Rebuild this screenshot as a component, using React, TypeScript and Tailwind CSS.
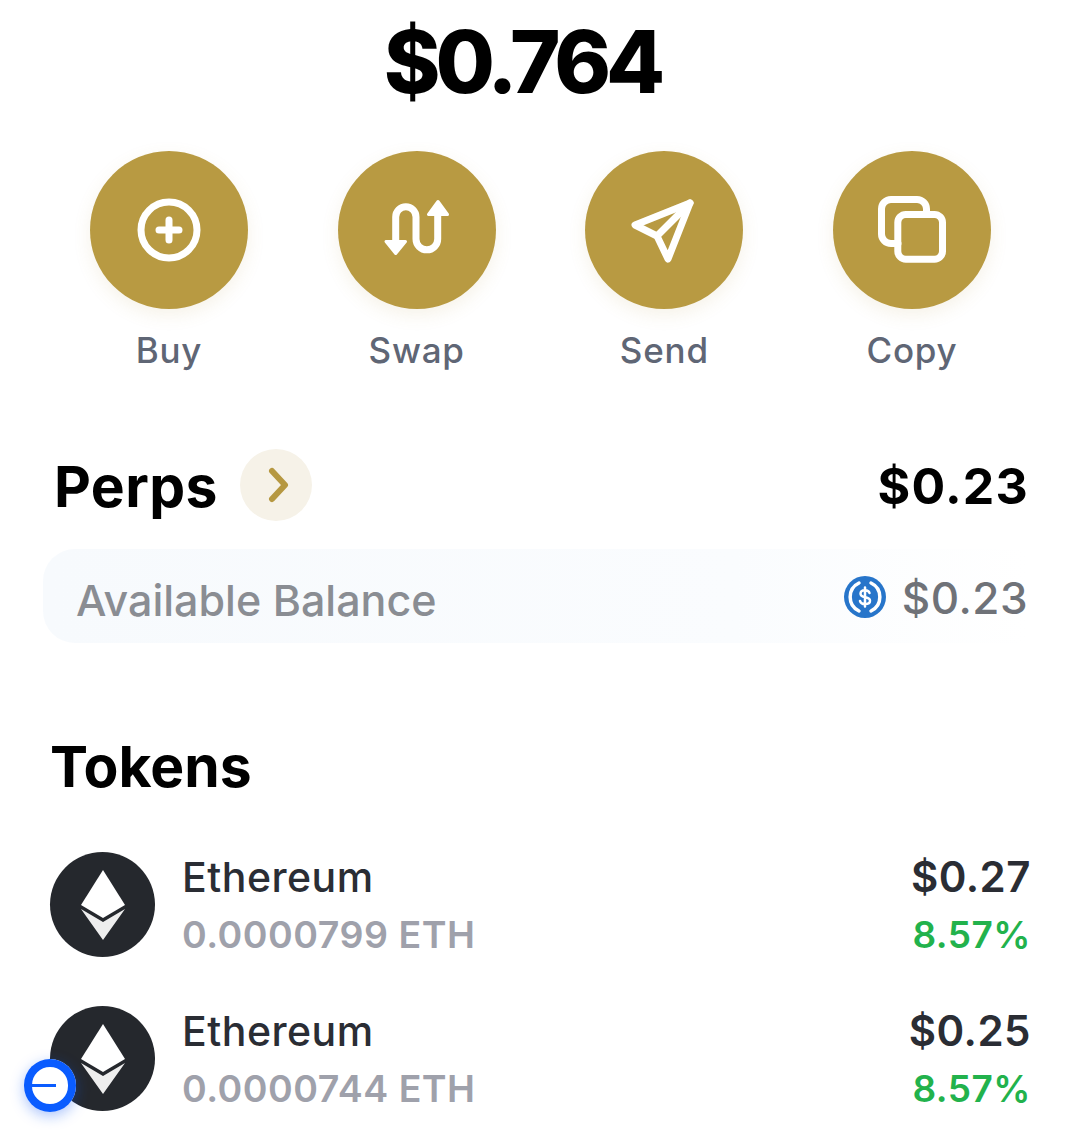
import React from "react";

const font = { fontFamily: "Inter, sans-serif" };

function Action({ label, children }: { label: string; children: React.ReactNode }) {
  return (
    <div className="flex w-[158px] flex-col items-center">
      <div className="flex h-[158px] w-[158px] items-center justify-center rounded-full bg-[#b89a42] shadow-[0_6px_18px_rgba(182,152,65,0.12)]">
        {children}
      </div>
      <div className="mt-[20px] text-[35px] font-[450] leading-[42px] tracking-[0.8px] text-[#5f6675]">{label}</div>
    </div>
  );
}

function Eth() {
  return (
    <div className="flex h-[105px] w-[105px] items-center justify-center rounded-full bg-[#25282d]">
      <svg width="44" height="70" viewBox="0 0 44 70">
        <path d="M22 0 L44 35 L22 48 L0 35 Z" fill="#fff" />
        <path d="M0 39 L22 52 L44 39 L22 70 Z" fill="#eeeeee" />
      </svg>
    </div>
  );
}

function Token({ amount, value, mt }: { amount: string; value: string; mt: string }) {
  return (
    <div className={`flex h-[105px] items-start justify-between ${mt}`}>
      <div className="flex items-center">
        <Eth />
        <div className="ml-[27px]">
          <div className="text-[41px] font-medium leading-[50px] tracking-[0.5px] text-[#2a2d34]">Ethereum</div>
          <div className="mt-[11px] text-[37.5px] font-semibold leading-[44px] tracking-[0.5px] text-[#9fa1ab]">{amount}</div>
        </div>
      </div>
      <div className="text-right">
        <div className="text-[42px] font-semibold leading-[50px] tracking-[0.5px] text-[#2a2d34]">{value}</div>
        <div className="mt-[11px] text-[37px] font-semibold leading-[44px] tracking-[0.5px] text-[#22b24c]">8.57%</div>
      </div>
    </div>
  );
}

export default function App() {
  return (
    <div style={font} className="relative h-[1143px] w-[1080px] overflow-hidden bg-white">
      <div className="flex justify-center pr-[36px] pt-[16px] text-[86px] font-[850] leading-[92px] tracking-[-5px] text-black">$0.764</div>

      <div className="mt-[43px] flex justify-between pl-[90px] pr-[89px]">
        <Action label="Buy">
          <svg width="64" height="64" viewBox="0 0 64 64" fill="none" stroke="#fff" strokeWidth="7" strokeLinecap="round">
            <circle cx="32" cy="32" r="28" />
            <path d="M32 22v20M22 32h20" />
          </svg>
        </Action>
        <Action label="Swap">
          <svg width="74" height="68" viewBox="0 0 74 68" fill="none" stroke="#fff" strokeWidth="7" strokeLinecap="round" strokeLinejoin="round">
            <path d="M15.700 46V21a10.150 10.150 0 0 1 20.300 0V43a10.850 10.850 0 0 0 21.700 0V18" />
            <path d="M6 45.500H25.500L15.700 57.500ZM48.500 18.500H67.500L58 5.500Z" fill="#fff" strokeWidth="3" />
          </svg>
        </Action>
        <Action label="Send">
          <svg width="78" height="70" viewBox="0 0 78 70" fill="none" stroke="#fff" strokeWidth="7" strokeLinecap="round" strokeLinejoin="round">
            <path d="M65 8L10 30L32 41L43 64Z" />
            <path d="M32 41L65 8" />
          </svg>
        </Action>
        <Action label="Copy">
          <svg width="76" height="76" viewBox="0 0 76 76" fill="none" stroke="#fff" strokeWidth="7" strokeLinecap="round" strokeLinejoin="round">
            <rect x="23.800" y="22.500" width="44.700" height="44.700" rx="8" />
            <path d="M24 51.500h-7a9.500 9.500 0 0 1-9.500-9.500V17a9.500 9.500 0 0 1 9.500-9.500h26a9.500 9.500 0 0 1 9.500 9.500v5.500" />
          </svg>
        </Action>
      </div>

      <div className="mt-[78px] flex items-center justify-between pl-[54px] pr-[51px]">
        <div className="flex items-center">
          <span className="mt-[4px] text-[57px] font-bold leading-[68px] tracking-[0.4px] text-black">Perps</span>
          <span className="ml-[22px] flex h-[72px] w-[72px] items-center justify-center rounded-full bg-[#f6f2e8]">
            <svg width="24" height="36" viewBox="0 0 24 36" fill="none" stroke="#b69841" strokeWidth="6" strokeLinecap="round" strokeLinejoin="round" className="ml-[4px]">
              <path d="M6 4l13 14L6 32" />
            </svg>
          </span>
        </div>
        <span className="mt-[2px] text-[50px] font-bold leading-[70px] tracking-[1.200px] text-black">$0.23</span>
      </div>

      <div className="ml-[43px] mr-[52px] mt-[28px] flex h-[94px] items-center justify-between rounded-l-[32px] bg-gradient-to-r from-[#f7fafd] via-[#fafcfe] via-70% to-white pl-[33px]">
        <span className="mt-[7px] text-[43px] font-medium leading-[50px] text-[#8a8d93]">Available Balance</span>
        <div className="flex items-center">
          <svg width="42" height="42" viewBox="0 0 42 42" fill="none" className="mt-[2px]">
            <circle cx="21" cy="21" r="21" fill="#2775ca" />
            <path d="M15 7a15.500 15.500 0 0 0 0 28M27 7a15.500 15.500 0 0 1 0 28" stroke="#fff" strokeWidth="3.500" strokeLinecap="round" />
            <path d="M25.500 17c-.5-1.800-2.200-2.800-4.500-2.800s-4.500 1.100-4.500 3.500c0 5 9.500 2.200 9.500 7 0 2.300-2.200 3.400-5 3.400s-4.500-1.100-5-3.200M21 11.500v19" stroke="#fff" strokeWidth="2.500" strokeLinecap="round" />
          </svg>
          <span className="ml-[16px] mt-[3px] text-[44px] font-medium leading-[50px] tracking-[0.5px] text-[#6f7278]">$0.23</span>
        </div>
      </div>

      <div className="ml-[50px] mt-[93px] text-[57px] font-bold leading-[62px] text-black">Tokens</div>

      <div className="mt-[54px] pl-[50px] pr-[49px]">
        <Token amount="0.0000799 ETH" value="$0.27" mt="" />
        <Token amount="0.0000744 ETH" value="$0.25" mt="mt-[49px]" />
      </div>

      <div className="absolute left-[24px] top-[1059px] flex h-[53px] w-[52px] items-center justify-start rounded-full bg-white pl-[8px] shadow-[0_4px_14px_rgba(15,85,246,0.35)] ring-[8px] ring-inset ring-[#0a5cff]">
        <div className="h-[3px] w-[24px] bg-[#0a5cff]" />
      </div>
    </div>
  );
}
